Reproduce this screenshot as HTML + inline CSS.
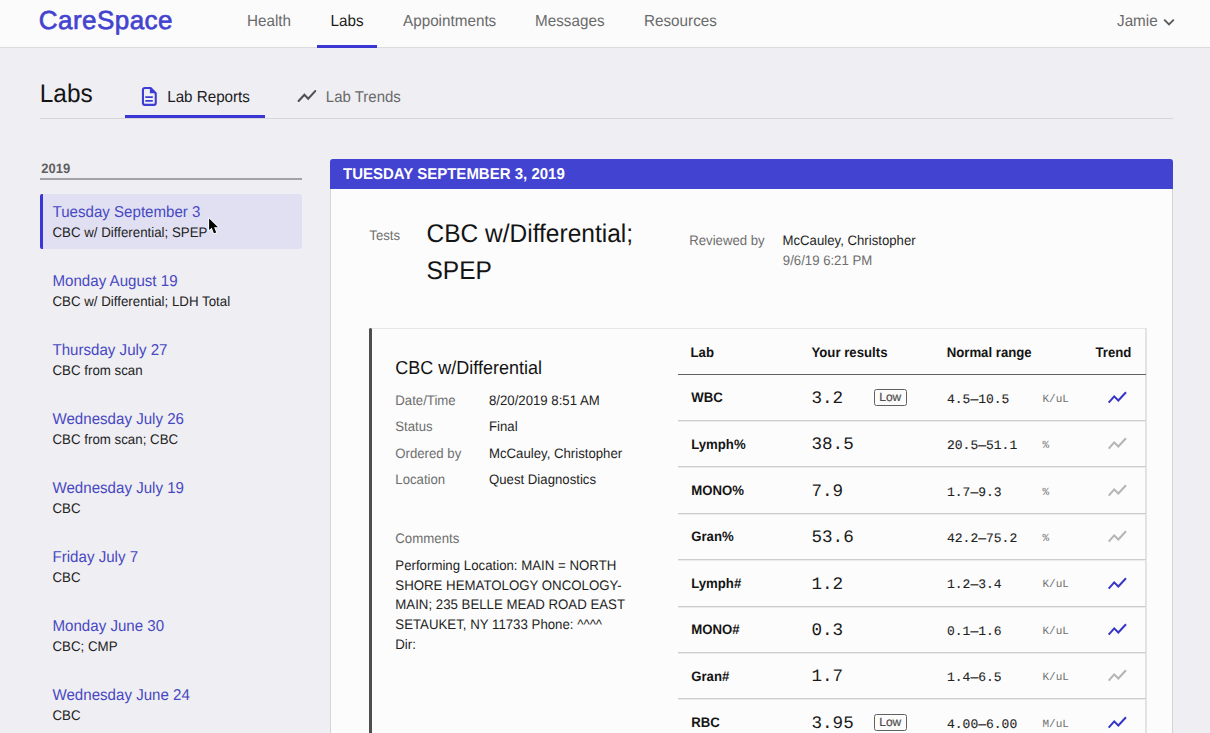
<!DOCTYPE html>
<html><head><meta charset="utf-8">
<style>
*{margin:0;padding:0}
html,body{width:1210px;height:733px;overflow:hidden}
body{background:#efeef3;position:relative;font-family:"Liberation Sans",sans-serif;text-rendering:geometricPrecision}
.t{position:absolute;white-space:nowrap}
.r{position:absolute}
.low{width:32.5px;height:17px;border:1.5px solid #606060;border-radius:2.5px;box-sizing:border-box;font-size:12px;color:#4f4f4f;text-align:center;line-height:14px;-webkit-text-stroke:0.2px #4f4f4f}
</style></head><body>
<div class="r" style="left:0px;top:0px;width:1210px;height:47px;background:#fbfbfb;"></div>
<div class="r" style="left:0px;top:47px;width:1210px;height:1px;background:#dcdcdf;"></div>
<div class="t" style="left:38.80px;top:7.09px;font-size:26px;line-height:26px;color:#4343cf;font-weight:normal;font-family:'Liberation Sans',sans-serif;-webkit-text-stroke:0.65px #4343cf;letter-spacing:0.45px;">CareSpace</div>
<div class="t" style="left:247.00px;top:14.19px;font-size:15.25px;line-height:15.25px;color:#6a6a6a;font-weight:normal;font-family:'Liberation Sans',sans-serif;transform:scaleY(1.045);transform-origin:0 12.91px;">Health</div>
<div class="t" style="left:330.50px;top:14.19px;font-size:15.25px;line-height:15.25px;color:#1c1c1c;font-weight:normal;font-family:'Liberation Sans',sans-serif;transform:scaleY(1.045);transform-origin:0 12.91px;">Labs</div>
<div class="t" style="left:403.00px;top:14.09px;font-size:15.25px;line-height:15.25px;color:#6a6a6a;font-weight:normal;font-family:'Liberation Sans',sans-serif;transform:scaleY(1.045);transform-origin:0 12.91px;">Appointments</div>
<div class="t" style="left:535.00px;top:14.09px;font-size:15.25px;line-height:15.25px;color:#6a6a6a;font-weight:normal;font-family:'Liberation Sans',sans-serif;transform:scaleY(1.045);transform-origin:0 12.91px;">Messages</div>
<div class="t" style="left:644.00px;top:14.09px;font-size:15.25px;line-height:15.25px;color:#6a6a6a;font-weight:normal;font-family:'Liberation Sans',sans-serif;transform:scaleY(1.045);transform-origin:0 12.91px;">Resources</div>
<div class="r" style="left:317px;top:45px;width:60px;height:3px;background:#3b35d3;"></div>
<div class="t" style="left:1117.00px;top:14.19px;font-size:15.25px;line-height:15.25px;color:#6a6a6a;font-weight:normal;font-family:'Liberation Sans',sans-serif;transform:scaleY(1.045);transform-origin:0 12.91px;">Jamie</div>
<svg class="r" style="left:1162px;top:17px" width="14" height="10" viewBox="0 0 14 10"><path d="M2.2 2.6 L7 7.4 L11.8 2.6" fill="none" stroke="#5a5a5a" stroke-width="1.9"/></svg>
<div class="t" style="left:39.80px;top:82.84px;font-size:24.4px;line-height:24.4px;color:#141414;font-weight:normal;font-family:'Liberation Sans',sans-serif;transform:scaleY(1.045);transform-origin:0 20.66px;">Labs</div>
<svg class="r" style="left:139px;top:85px" width="20" height="23" viewBox="0 0 20 23"><path d="M11.6 3.05 H5.8 Q3.95 3.05 3.95 4.9 V18 Q3.95 19.85 5.8 19.85 H14.9 Q16.75 19.85 16.75 18 V8.2 Z" fill="none" stroke="#3d3dd4" stroke-width="2.1" stroke-linejoin="round"/><path d="M10.9 2.6 L17.2 8.9 L17.2 8.3 H10.9 Z" fill="#3d3dd4"/><path d="M6.3 12.2 H13.8 M6.3 15.9 H13.8" stroke="#3d3dd4" stroke-width="1.8"/></svg>
<div class="t" style="left:167.20px;top:89.53px;font-size:15.2px;line-height:15.2px;color:#1c1c1c;font-weight:normal;font-family:'Liberation Sans',sans-serif;transform:scaleY(1.045);transform-origin:0 12.87px;">Lab Reports</div>
<svg class="r" style="left:295px;top:88px" width="24" height="17" viewBox="0 0 24 17"><path d="M3.6 13 L9.4 6.7 L13.2 10.7 L20.2 3.1" fill="none" stroke="#505050" stroke-width="2.1" stroke-linecap="round"/></svg>
<div class="t" style="left:325.80px;top:89.70px;font-size:15px;line-height:15px;color:#6a6a6a;font-weight:normal;font-family:'Liberation Sans',sans-serif;transform:scaleY(1.045);transform-origin:0 12.70px;">Lab Trends</div>
<div class="r" style="left:40px;top:118px;width:1133px;height:1px;background:#d6d6d9;"></div>
<div class="r" style="left:125px;top:115px;width:140px;height:3px;background:#3b35d3;"></div>
<div class="t" style="left:41.30px;top:162.09px;font-size:13px;line-height:13px;color:#5f5f5f;font-weight:bold;font-family:'Liberation Sans',sans-serif;transform:scaleY(1.045);transform-origin:0 11.01px;">2019</div>
<div class="r" style="left:40px;top:178px;width:262px;height:2px;background:#a2a2a2;top:178.3px;"></div>
<div class="r" style="left:40px;top:194px;width:262px;height:55px;background:#e0e0f2;border-radius:3px;"></div>
<div class="r" style="left:40px;top:194px;width:3px;height:55px;background:#3b35d3;border-radius:2px 0 0 2px;"></div>
<div class="t" style="left:52.50px;top:204.61px;font-size:15.1px;line-height:15.1px;color:#4848c2;font-weight:normal;font-family:'Liberation Sans',sans-serif;transform:scaleY(1.045);transform-origin:0 12.79px;">Tuesday September 3</div>
<div class="t" style="left:52.50px;top:226.04px;font-size:13.3px;line-height:13.3px;color:#222;font-weight:normal;font-family:'Liberation Sans',sans-serif;transform:scaleY(1.045);transform-origin:0 11.26px;">CBC w/ Differential; SPEP</div>
<div class="t" style="left:52.50px;top:273.61px;font-size:15.1px;line-height:15.1px;color:#4848c2;font-weight:normal;font-family:'Liberation Sans',sans-serif;transform:scaleY(1.045);transform-origin:0 12.79px;">Monday August 19</div>
<div class="t" style="left:52.50px;top:295.04px;font-size:13.3px;line-height:13.3px;color:#222;font-weight:normal;font-family:'Liberation Sans',sans-serif;transform:scaleY(1.045);transform-origin:0 11.26px;">CBC w/ Differential; LDH Total</div>
<div class="t" style="left:52.50px;top:342.61px;font-size:15.1px;line-height:15.1px;color:#4848c2;font-weight:normal;font-family:'Liberation Sans',sans-serif;transform:scaleY(1.045);transform-origin:0 12.79px;">Thursday July 27</div>
<div class="t" style="left:52.50px;top:364.04px;font-size:13.3px;line-height:13.3px;color:#222;font-weight:normal;font-family:'Liberation Sans',sans-serif;transform:scaleY(1.045);transform-origin:0 11.26px;">CBC from scan</div>
<div class="t" style="left:52.50px;top:411.61px;font-size:15.1px;line-height:15.1px;color:#4848c2;font-weight:normal;font-family:'Liberation Sans',sans-serif;transform:scaleY(1.045);transform-origin:0 12.79px;">Wednesday July 26</div>
<div class="t" style="left:52.50px;top:433.04px;font-size:13.3px;line-height:13.3px;color:#222;font-weight:normal;font-family:'Liberation Sans',sans-serif;transform:scaleY(1.045);transform-origin:0 11.26px;">CBC from scan; CBC</div>
<div class="t" style="left:52.50px;top:480.61px;font-size:15.1px;line-height:15.1px;color:#4848c2;font-weight:normal;font-family:'Liberation Sans',sans-serif;transform:scaleY(1.045);transform-origin:0 12.79px;">Wednesday July 19</div>
<div class="t" style="left:52.50px;top:502.04px;font-size:13.3px;line-height:13.3px;color:#222;font-weight:normal;font-family:'Liberation Sans',sans-serif;transform:scaleY(1.045);transform-origin:0 11.26px;">CBC</div>
<div class="t" style="left:52.50px;top:549.61px;font-size:15.1px;line-height:15.1px;color:#4848c2;font-weight:normal;font-family:'Liberation Sans',sans-serif;transform:scaleY(1.045);transform-origin:0 12.79px;">Friday July 7</div>
<div class="t" style="left:52.50px;top:571.04px;font-size:13.3px;line-height:13.3px;color:#222;font-weight:normal;font-family:'Liberation Sans',sans-serif;transform:scaleY(1.045);transform-origin:0 11.26px;">CBC</div>
<div class="t" style="left:52.50px;top:618.61px;font-size:15.1px;line-height:15.1px;color:#4848c2;font-weight:normal;font-family:'Liberation Sans',sans-serif;transform:scaleY(1.045);transform-origin:0 12.79px;">Monday June 30</div>
<div class="t" style="left:52.50px;top:640.04px;font-size:13.3px;line-height:13.3px;color:#222;font-weight:normal;font-family:'Liberation Sans',sans-serif;transform:scaleY(1.045);transform-origin:0 11.26px;">CBC; CMP</div>
<div class="t" style="left:52.50px;top:687.61px;font-size:15.1px;line-height:15.1px;color:#4848c2;font-weight:normal;font-family:'Liberation Sans',sans-serif;transform:scaleY(1.045);transform-origin:0 12.79px;">Wednesday June 24</div>
<div class="t" style="left:52.50px;top:709.04px;font-size:13.3px;line-height:13.3px;color:#222;font-weight:normal;font-family:'Liberation Sans',sans-serif;transform:scaleY(1.045);transform-origin:0 11.26px;">CBC</div>
<svg class="r" style="left:205px;top:215px" width="18" height="22" viewBox="0 0 18 22"><path d="M4.1 3.5 L4.1 15.1 L6.8 12.8 L8.9 18.3 L11.2 17.4 L9.1 12.2 L13 12.2 Z" fill="#000" stroke="#fff" stroke-width="1.6" stroke-linejoin="round" paint-order="stroke"/></svg>
<div class="r" style="left:330px;top:159px;width:843px;height:600px;background:#fcfcfc;border:1px solid #d4d4d7;border-radius:3px;box-sizing:border-box;"></div>
<div class="r" style="left:330px;top:159px;width:843px;height:30px;background:#4343d2;border-radius:3px 3px 0 0;"></div>
<div class="t" style="left:343.00px;top:167.20px;font-size:15px;line-height:15px;color:#ffffff;font-weight:bold;font-family:'Liberation Sans',sans-serif;transform:scaleY(1.045);transform-origin:0 12.70px;">TUESDAY SEPTEMBER 3, 2019</div>
<div class="t" style="left:369.30px;top:229.02px;font-size:13.2px;line-height:13.2px;color:#6e6e6e;font-weight:normal;font-family:'Liberation Sans',sans-serif;transform:scaleY(1.045);transform-origin:0 11.18px;">Tests</div>
<div class="t" style="left:426.50px;top:222.96px;font-size:24.5px;line-height:24.5px;color:#141414;font-weight:normal;font-family:'Liberation Sans',sans-serif;transform:scaleY(1.045);transform-origin:0 20.74px;">CBC w/Differential;</div>
<div class="t" style="left:426.50px;top:259.76px;font-size:24.5px;line-height:24.5px;color:#141414;font-weight:normal;font-family:'Liberation Sans',sans-serif;transform:scaleY(1.045);transform-origin:0 20.74px;">SPEP</div>
<div class="t" style="left:689.20px;top:233.92px;font-size:13.2px;line-height:13.2px;color:#6e6e6e;font-weight:normal;font-family:'Liberation Sans',sans-serif;transform:scaleY(1.045);transform-origin:0 11.18px;">Reviewed by</div>
<div class="t" style="left:782.50px;top:233.92px;font-size:13.2px;line-height:13.2px;color:#1f1f1f;font-weight:normal;font-family:'Liberation Sans',sans-serif;transform:scaleY(1.045);transform-origin:0 11.18px;">McCauley, Christopher</div>
<div class="t" style="left:782.80px;top:253.62px;font-size:13.2px;line-height:13.2px;color:#6e6e6e;font-weight:normal;font-family:'Liberation Sans',sans-serif;transform:scaleY(1.045);transform-origin:0 11.18px;">9/6/19 6:21 PM</div>
<div class="r" style="left:369px;top:328px;width:778px;height:420px;background:#fcfcfc;border-top:1px solid #e6e6e6;border-right:2px solid #e3e3e3;box-sizing:border-box;"></div>
<div class="r" style="left:369px;top:328px;width:3px;height:420px;background:#4e4e4e;border-radius:1.5px 1.5px 0 0;"></div>
<div class="t" style="left:395.30px;top:358.96px;font-size:18px;line-height:18px;color:#141414;font-weight:normal;font-family:'Liberation Sans',sans-serif;transform:scaleY(1.045);transform-origin:0 15.24px;">CBC w/Differential</div>
<div class="t" style="left:395.30px;top:393.72px;font-size:13.2px;line-height:13.2px;color:#6e6e6e;font-weight:normal;font-family:'Liberation Sans',sans-serif;transform:scaleY(1.045);transform-origin:0 11.18px;">Date/Time</div>
<div class="t" style="left:489.00px;top:393.72px;font-size:13.2px;line-height:13.2px;color:#1f1f1f;font-weight:normal;font-family:'Liberation Sans',sans-serif;transform:scaleY(1.045);transform-origin:0 11.18px;">8/20/2019 8:51 AM</div>
<div class="t" style="left:395.30px;top:420.17px;font-size:13.2px;line-height:13.2px;color:#6e6e6e;font-weight:normal;font-family:'Liberation Sans',sans-serif;transform:scaleY(1.045);transform-origin:0 11.18px;">Status</div>
<div class="t" style="left:489.00px;top:420.17px;font-size:13.2px;line-height:13.2px;color:#1f1f1f;font-weight:normal;font-family:'Liberation Sans',sans-serif;transform:scaleY(1.045);transform-origin:0 11.18px;">Final</div>
<div class="t" style="left:395.30px;top:446.62px;font-size:13.2px;line-height:13.2px;color:#6e6e6e;font-weight:normal;font-family:'Liberation Sans',sans-serif;transform:scaleY(1.045);transform-origin:0 11.18px;">Ordered by</div>
<div class="t" style="left:489.00px;top:446.62px;font-size:13.2px;line-height:13.2px;color:#1f1f1f;font-weight:normal;font-family:'Liberation Sans',sans-serif;transform:scaleY(1.045);transform-origin:0 11.18px;">McCauley, Christopher</div>
<div class="t" style="left:395.30px;top:473.07px;font-size:13.2px;line-height:13.2px;color:#6e6e6e;font-weight:normal;font-family:'Liberation Sans',sans-serif;transform:scaleY(1.045);transform-origin:0 11.18px;">Location</div>
<div class="t" style="left:489.00px;top:473.07px;font-size:13.2px;line-height:13.2px;color:#1f1f1f;font-weight:normal;font-family:'Liberation Sans',sans-serif;transform:scaleY(1.045);transform-origin:0 11.18px;">Quest Diagnostics</div>
<div class="t" style="left:395.30px;top:532.48px;font-size:13.25px;line-height:13.25px;color:#6e6e6e;font-weight:normal;font-family:'Liberation Sans',sans-serif;transform:scaleY(1.045);transform-origin:0 11.22px;">Comments</div>
<div class="t" style="left:395.30px;top:559.08px;font-size:13.25px;line-height:13.25px;color:#1f1f1f;font-weight:normal;font-family:'Liberation Sans',sans-serif;transform:scaleY(1.045);transform-origin:0 11.22px;">Performing Location: MAIN = NORTH</div>
<div class="t" style="left:395.30px;top:578.78px;font-size:13.25px;line-height:13.25px;color:#1f1f1f;font-weight:normal;font-family:'Liberation Sans',sans-serif;transform:scaleY(1.045);transform-origin:0 11.22px;">SHORE HEMATOLOGY ONCOLOGY-</div>
<div class="t" style="left:395.30px;top:598.48px;font-size:13.25px;line-height:13.25px;color:#1f1f1f;font-weight:normal;font-family:'Liberation Sans',sans-serif;transform:scaleY(1.045);transform-origin:0 11.22px;">MAIN; 235 BELLE MEAD ROAD EAST</div>
<div class="t" style="left:395.30px;top:618.18px;font-size:13.25px;line-height:13.25px;color:#1f1f1f;font-weight:normal;font-family:'Liberation Sans',sans-serif;transform:scaleY(1.045);transform-origin:0 11.22px;">SETAUKET, NY 11733 Phone: ^^^^</div>
<div class="t" style="left:395.30px;top:637.88px;font-size:13.25px;line-height:13.25px;color:#1f1f1f;font-weight:normal;font-family:'Liberation Sans',sans-serif;transform:scaleY(1.045);transform-origin:0 11.22px;">Dir:</div>
<div class="t" style="left:690.50px;top:345.82px;font-size:13.2px;line-height:13.2px;color:#141414;font-weight:bold;font-family:'Liberation Sans',sans-serif;transform:scaleY(1.045);transform-origin:0 11.18px;">Lab</div>
<div class="t" style="left:811.50px;top:345.82px;font-size:13.2px;line-height:13.2px;color:#141414;font-weight:bold;font-family:'Liberation Sans',sans-serif;transform:scaleY(1.045);transform-origin:0 11.18px;">Your results</div>
<div class="t" style="left:946.70px;top:345.82px;font-size:13.2px;line-height:13.2px;color:#141414;font-weight:bold;font-family:'Liberation Sans',sans-serif;transform:scaleY(1.045);transform-origin:0 11.18px;">Normal range</div>
<div class="t" style="left:1095.50px;top:345.82px;font-size:13.2px;line-height:13.2px;color:#141414;font-weight:bold;font-family:'Liberation Sans',sans-serif;transform:scaleY(1.045);transform-origin:0 11.18px;">Trend</div>
<div class="r" style="left:678px;top:374px;width:468px;height:1px;background:#636363;"></div>
<div class="t" style="left:691.20px;top:391.32px;font-size:13.2px;line-height:13.2px;color:#141414;font-weight:bold;font-family:'Liberation Sans',sans-serif;transform:scaleY(1.045);transform-origin:0 11.18px;">WBC</div>
<div class="t" style="left:811.50px;top:391.02px;font-size:17.6px;line-height:17.6px;color:#1a1a1a;font-weight:normal;font-family:'Liberation Mono',monospace;">3.2</div>
<div class="r low" style="left:874px;top:388.90px"><span>Low</span></div>
<div class="t" style="left:947.00px;top:392.94px;font-size:13px;line-height:13px;color:#1f1f1f;font-weight:normal;font-family:'Liberation Mono',monospace;-webkit-text-stroke:0.12px #2a2a2a;">4.5—10.5</div>
<div class="t" style="left:1042.50px;top:394.97px;font-size:11px;line-height:11px;color:#707070;font-weight:normal;font-family:'Liberation Mono',monospace;">K/uL</div>
<svg class="r" style="left:1106px;top:389.00px" width="22" height="16" viewBox="0 0 22 16"><path d="M2.7 13.7 L8.2 7.4 L12.3 11.5 L20 3.2" fill="none" stroke="#3535c8" stroke-width="2"/></svg>
<div class="r" style="left:678px;top:420px;width:468px;height:1px;background:#cdcdcd;box-shadow:0 1px 0 #ebebeb;"></div>
<div class="t" style="left:691.20px;top:437.70px;font-size:13.2px;line-height:13.2px;color:#141414;font-weight:bold;font-family:'Liberation Sans',sans-serif;transform:scaleY(1.045);transform-origin:0 11.18px;">Lymph%</div>
<div class="t" style="left:811.50px;top:437.40px;font-size:17.6px;line-height:17.6px;color:#1a1a1a;font-weight:normal;font-family:'Liberation Mono',monospace;">38.5</div>
<div class="t" style="left:947.00px;top:439.32px;font-size:13px;line-height:13px;color:#1f1f1f;font-weight:normal;font-family:'Liberation Mono',monospace;-webkit-text-stroke:0.12px #2a2a2a;">20.5—51.1</div>
<div class="t" style="left:1042.50px;top:441.35px;font-size:11px;line-height:11px;color:#707070;font-weight:normal;font-family:'Liberation Mono',monospace;">%</div>
<svg class="r" style="left:1106px;top:435.38px" width="22" height="16" viewBox="0 0 22 16"><path d="M2.7 13.7 L8.2 7.4 L12.3 11.5 L20 3.2" fill="none" stroke="#b4b4b4" stroke-width="2"/></svg>
<div class="r" style="left:678px;top:466px;width:468px;height:1px;background:#cdcdcd;box-shadow:0 1px 0 #ebebeb;"></div>
<div class="t" style="left:691.20px;top:484.08px;font-size:13.2px;line-height:13.2px;color:#141414;font-weight:bold;font-family:'Liberation Sans',sans-serif;transform:scaleY(1.045);transform-origin:0 11.18px;">MONO%</div>
<div class="t" style="left:811.50px;top:483.78px;font-size:17.6px;line-height:17.6px;color:#1a1a1a;font-weight:normal;font-family:'Liberation Mono',monospace;">7.9</div>
<div class="t" style="left:947.00px;top:485.70px;font-size:13px;line-height:13px;color:#1f1f1f;font-weight:normal;font-family:'Liberation Mono',monospace;-webkit-text-stroke:0.12px #2a2a2a;">1.7—9.3</div>
<div class="t" style="left:1042.50px;top:487.73px;font-size:11px;line-height:11px;color:#707070;font-weight:normal;font-family:'Liberation Mono',monospace;">%</div>
<svg class="r" style="left:1106px;top:481.76px" width="22" height="16" viewBox="0 0 22 16"><path d="M2.7 13.7 L8.2 7.4 L12.3 11.5 L20 3.2" fill="none" stroke="#b4b4b4" stroke-width="2"/></svg>
<div class="r" style="left:678px;top:513px;width:468px;height:1px;background:#cdcdcd;box-shadow:0 1px 0 #ebebeb;"></div>
<div class="t" style="left:691.20px;top:530.46px;font-size:13.2px;line-height:13.2px;color:#141414;font-weight:bold;font-family:'Liberation Sans',sans-serif;transform:scaleY(1.045);transform-origin:0 11.18px;">Gran%</div>
<div class="t" style="left:811.50px;top:530.16px;font-size:17.6px;line-height:17.6px;color:#1a1a1a;font-weight:normal;font-family:'Liberation Mono',monospace;">53.6</div>
<div class="t" style="left:947.00px;top:532.08px;font-size:13px;line-height:13px;color:#1f1f1f;font-weight:normal;font-family:'Liberation Mono',monospace;-webkit-text-stroke:0.12px #2a2a2a;">42.2—75.2</div>
<div class="t" style="left:1042.50px;top:534.11px;font-size:11px;line-height:11px;color:#707070;font-weight:normal;font-family:'Liberation Mono',monospace;">%</div>
<svg class="r" style="left:1106px;top:528.14px" width="22" height="16" viewBox="0 0 22 16"><path d="M2.7 13.7 L8.2 7.4 L12.3 11.5 L20 3.2" fill="none" stroke="#b4b4b4" stroke-width="2"/></svg>
<div class="r" style="left:678px;top:559px;width:468px;height:1px;background:#cdcdcd;box-shadow:0 1px 0 #ebebeb;"></div>
<div class="t" style="left:691.20px;top:576.84px;font-size:13.2px;line-height:13.2px;color:#141414;font-weight:bold;font-family:'Liberation Sans',sans-serif;transform:scaleY(1.045);transform-origin:0 11.18px;">Lymph#</div>
<div class="t" style="left:811.50px;top:576.54px;font-size:17.6px;line-height:17.6px;color:#1a1a1a;font-weight:normal;font-family:'Liberation Mono',monospace;">1.2</div>
<div class="t" style="left:947.00px;top:578.46px;font-size:13px;line-height:13px;color:#1f1f1f;font-weight:normal;font-family:'Liberation Mono',monospace;-webkit-text-stroke:0.12px #2a2a2a;">1.2—3.4</div>
<div class="t" style="left:1042.50px;top:580.49px;font-size:11px;line-height:11px;color:#707070;font-weight:normal;font-family:'Liberation Mono',monospace;">K/uL</div>
<svg class="r" style="left:1106px;top:574.52px" width="22" height="16" viewBox="0 0 22 16"><path d="M2.7 13.7 L8.2 7.4 L12.3 11.5 L20 3.2" fill="none" stroke="#3535c8" stroke-width="2"/></svg>
<div class="r" style="left:678px;top:606px;width:468px;height:1px;background:#cdcdcd;box-shadow:0 1px 0 #ebebeb;"></div>
<div class="t" style="left:691.20px;top:623.22px;font-size:13.2px;line-height:13.2px;color:#141414;font-weight:bold;font-family:'Liberation Sans',sans-serif;transform:scaleY(1.045);transform-origin:0 11.18px;">MONO#</div>
<div class="t" style="left:811.50px;top:622.92px;font-size:17.6px;line-height:17.6px;color:#1a1a1a;font-weight:normal;font-family:'Liberation Mono',monospace;">0.3</div>
<div class="t" style="left:947.00px;top:624.84px;font-size:13px;line-height:13px;color:#1f1f1f;font-weight:normal;font-family:'Liberation Mono',monospace;-webkit-text-stroke:0.12px #2a2a2a;">0.1—1.6</div>
<div class="t" style="left:1042.50px;top:626.87px;font-size:11px;line-height:11px;color:#707070;font-weight:normal;font-family:'Liberation Mono',monospace;">K/uL</div>
<svg class="r" style="left:1106px;top:620.90px" width="22" height="16" viewBox="0 0 22 16"><path d="M2.7 13.7 L8.2 7.4 L12.3 11.5 L20 3.2" fill="none" stroke="#3535c8" stroke-width="2"/></svg>
<div class="r" style="left:678px;top:652px;width:468px;height:1px;background:#cdcdcd;box-shadow:0 1px 0 #ebebeb;"></div>
<div class="t" style="left:691.20px;top:669.60px;font-size:13.2px;line-height:13.2px;color:#141414;font-weight:bold;font-family:'Liberation Sans',sans-serif;transform:scaleY(1.045);transform-origin:0 11.18px;">Gran#</div>
<div class="t" style="left:811.50px;top:669.30px;font-size:17.6px;line-height:17.6px;color:#1a1a1a;font-weight:normal;font-family:'Liberation Mono',monospace;">1.7</div>
<div class="t" style="left:947.00px;top:671.22px;font-size:13px;line-height:13px;color:#1f1f1f;font-weight:normal;font-family:'Liberation Mono',monospace;-webkit-text-stroke:0.12px #2a2a2a;">1.4—6.5</div>
<div class="t" style="left:1042.50px;top:673.25px;font-size:11px;line-height:11px;color:#707070;font-weight:normal;font-family:'Liberation Mono',monospace;">K/uL</div>
<svg class="r" style="left:1106px;top:667.28px" width="22" height="16" viewBox="0 0 22 16"><path d="M2.7 13.7 L8.2 7.4 L12.3 11.5 L20 3.2" fill="none" stroke="#b4b4b4" stroke-width="2"/></svg>
<div class="r" style="left:678px;top:698px;width:468px;height:1px;background:#cdcdcd;box-shadow:0 1px 0 #ebebeb;"></div>
<div class="t" style="left:691.20px;top:715.98px;font-size:13.2px;line-height:13.2px;color:#141414;font-weight:bold;font-family:'Liberation Sans',sans-serif;transform:scaleY(1.045);transform-origin:0 11.18px;">RBC</div>
<div class="t" style="left:811.50px;top:715.68px;font-size:17.6px;line-height:17.6px;color:#1a1a1a;font-weight:normal;font-family:'Liberation Mono',monospace;">3.95</div>
<div class="r low" style="left:874px;top:713.56px"><span>Low</span></div>
<div class="t" style="left:947.00px;top:717.60px;font-size:13px;line-height:13px;color:#1f1f1f;font-weight:normal;font-family:'Liberation Mono',monospace;-webkit-text-stroke:0.12px #2a2a2a;">4.00—6.00</div>
<div class="t" style="left:1042.50px;top:719.63px;font-size:11px;line-height:11px;color:#707070;font-weight:normal;font-family:'Liberation Mono',monospace;">M/uL</div>
<svg class="r" style="left:1106px;top:713.66px" width="22" height="16" viewBox="0 0 22 16"><path d="M2.7 13.7 L8.2 7.4 L12.3 11.5 L20 3.2" fill="none" stroke="#3535c8" stroke-width="2"/></svg>
</body></html>
